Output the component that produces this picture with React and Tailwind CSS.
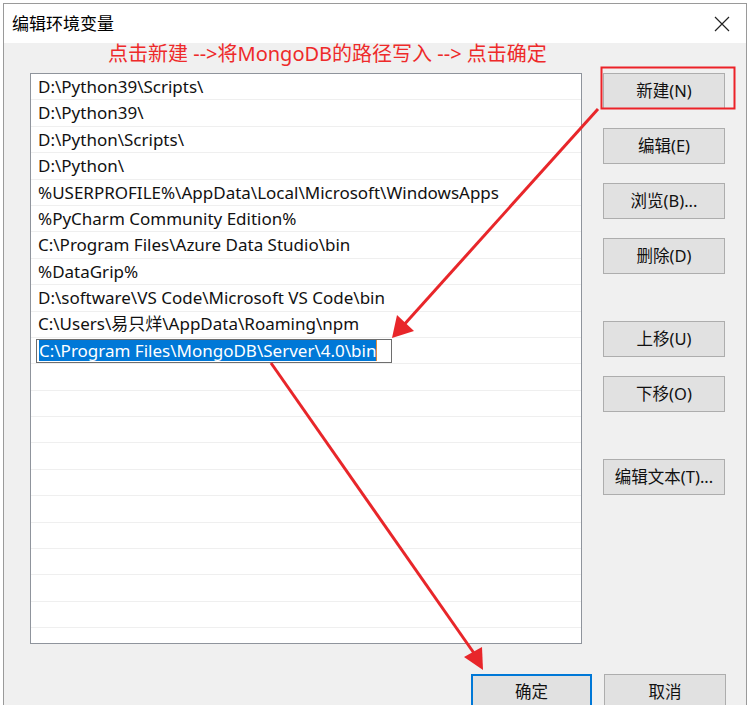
import React from "react";

const rows = [
  "D:\\Python39\\Scripts\\",
  "D:\\Python39\\",
  "D:\\Python\\Scripts\\",
  "D:\\Python\\",
  "%USERPROFILE%\\AppData\\Local\\Microsoft\\WindowsApps",
  "%PyCharm Community Edition%",
  "C:\\Program Files\\Azure Data Studio\\bin",
  "%DataGrip%",
  "D:\\software\\VS Code\\Microsoft VS Code\\bin",
  "C:\\Users\\易只烊\\AppData\\Roaming\\npm",
];

const FONT = { fontFamily: '"Noto Sans", "Noto Sans CJK SC", sans-serif' };

function Btn({ children, className = "" }) {
  return (
    <div
      className={
        "h-[36px] w-[122px] flex items-center justify-center bg-[#e1e1e1] border border-[#adadad] text-[16.5px] text-[#111] " +
        className
      }
    >
      {children}
    </div>
  );
}

export default function App() {
  const empty = Array.from({ length: 12 });
  return (
    <div
      className="relative w-[751px] h-[705px] overflow-hidden bg-white pl-[3px] pt-[3px]"
      style={FONT}
    >
      <div className="w-[744px] h-[720px] border border-[#9a9a9a] flex flex-col bg-[#f0f0f0]">
        {/* Title bar */}
        <div className="h-[39px] bg-white flex items-center justify-between pl-[8px] pr-[14px] shrink-0">
          <span className="text-[17px] text-black leading-none">编辑环境变量</span>
          <svg width="16" height="16" viewBox="0 0 16 16" className="mr-[2px]">
            <path d="M1 1 L15 15 M15 1 L1 15" stroke="#222" strokeWidth="1.2" />
          </svg>
        </div>
        {/* Body */}
        <div className="flex flex-col">
          <div className="h-[30px] pl-[104px] pb-[8px] flex items-center text-[20px] text-[#ee2a2a] leading-none whitespace-nowrap">
            点击新建 --&gt;将MongoDB的路径写入 --&gt; 点击确定
          </div>
          <div className="flex">
            <div className="ml-[26px] w-[552px] h-[571px] border border-[#8f949c] bg-white overflow-hidden">
              {rows.map((r, i) => (
                <div
                  key={i}
                  className="h-[26.4px] border-b border-[#efefef] flex items-center pl-[7px] text-[17px] text-[#111] whitespace-nowrap"
                >
                  {r}
                </div>
              ))}
              <div className="h-[26.4px] border-b border-[#efefef] flex items-center pl-[5px]">
                <div className="h-[24px] w-[356px] border border-[#6e6e6e] flex items-center pl-[2px]">
                  <span className="bg-[#0078d7] text-white text-[17px] h-[21px] flex items-center whitespace-nowrap">
                    C:\Program Files\MongoDB\Server\4.0\bin
                  </span>
                  <span className="w-[1px] h-[21px] bg-[#e08a3a]" />
                </div>
              </div>
              {empty.map((_, i) => (
                <div key={"e" + i} className="h-[26.4px] border-b border-[#efefef]" />
              ))}
            </div>
            <div className="ml-[21px] flex flex-col">
              <Btn>新建(N)</Btn>
              <Btn className="mt-[19px]">编辑(E)</Btn>
              <Btn className="mt-[19px]">浏览(B)...</Btn>
              <Btn className="mt-[19px]">删除(D)</Btn>
              <Btn className="mt-[47px]">上移(U)</Btn>
              <Btn className="mt-[19px]">下移(O)</Btn>
              <Btn className="mt-[47px]">编辑文本(T)...</Btn>
            </div>
          </div>
          <div className="flex mt-[30px] ml-[467px] gap-[12px]">
            <div className="h-[36px] w-[121px] flex items-center justify-center bg-[#e1e1e1] border-2 border-[#0078d7] text-[16.5px] text-[#111]">
              确定
            </div>
            <Btn>取消</Btn>
          </div>
        </div>
      </div>

      {/* Annotations overlay */}
      <svg
        className="absolute left-0 top-0 pointer-events-none"
        width="751"
        height="705"
        viewBox="0 0 751 705"
      >
        <rect x="601.5" y="67.5" width="133" height="41" fill="none" stroke="#ec2228" strokeWidth="2" />
        <line x1="598" y1="109" x2="402" y2="327" stroke="#e8262a" strokeWidth="3" />
        <polygon points="392,338 397,315 414,331" fill="#e8262a" />
        <line x1="271" y1="363" x2="476" y2="656" stroke="#e8262a" strokeWidth="3" />
        <polygon points="483,670 464,657 482,647" fill="#e8262a" />
      </svg>
    </div>
  );
}
